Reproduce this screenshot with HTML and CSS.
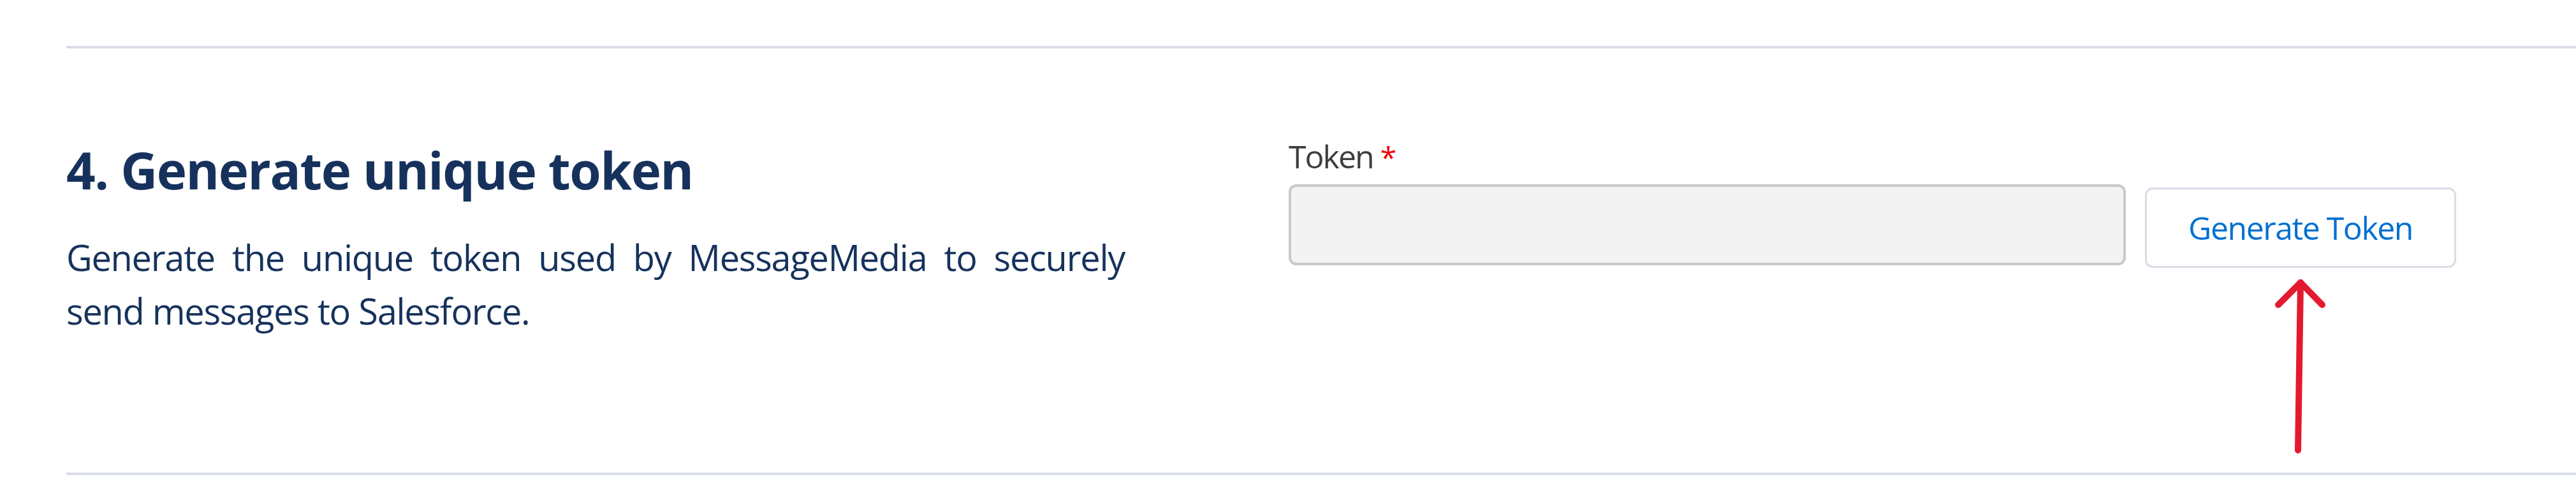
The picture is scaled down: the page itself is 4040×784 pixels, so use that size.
FILE: index.html
```html
<!DOCTYPE html>
<html lang="en">
    <head>
        <meta charset="UTF-8">
        <meta name="viewport" content="width=device-width, initial-scale=1">
        <title>Generate unique token</title>
        <link rel="stylesheet" href="styles.css">
    </head>
    <body>
        <section class="step">
            <div class="step-info">
                <h2 class="step-title">4. Generate unique token</h2>
                <p class="step-text">Generate the unique token used by MessageMedia to securely send messages to Salesforce.</p>
            </div>
            <div class="step-form">
                <label class="field-label" for="token">Token <abbr class="required" title="required">*</abbr></label>
                <div class="field-row">
                    <input class="field-input" id="token" type="text" readonly>
                    <div class="action">
                        <button class="btn" type="button">Generate Token</button>
                        <!-- annotation arrow pointing at the button -->
                        <svg class="arrow" width="100" height="290" viewBox="0 0 100 290">
                            <path d="M46 275 L50 12" />
                            <path d="M15 47 L50 12 L84 47" />
                        </svg>
                    </div>
                </div>
            </div>
        </section>
    </body>
</html>
```

FILE: styles.css
```css
body {
    margin: 0;
    background-color: #fff;
    font-family: "Open Sans", "Noto Sans", sans-serif;
}
.step {
    display: flex;
    margin: 72px 0 0 104px;
    padding: 140px 0 20px;
    border-top: 4px solid #d8dde6;
    border-bottom: 4px solid #d8dde6;
}
.step-info {
    width: 1660px;
    flex-shrink: 0;
}
.step-title {
    margin: 0;
    font-size: 80px;
    line-height: 100px;
    font-weight: 700;
    letter-spacing: -1.4px;
    color: #16325c;
}
.step-text {
    margin: 45px 0 0;
    font-size: 56px;
    line-height: 84px;
    letter-spacing: -1.3px;
    color: #16325c;
    text-align: justify;
}
.step-form {
    margin-left: 257px;
}
.field-label {
    display: block;
    margin-bottom: 13px;
    font-size: 50px;
    line-height: 59px;
    letter-spacing: -2px;
    color: #3e3e3c;
}
.required {
    font-size: 46px;
    color: #ee0000;
    text-decoration: none;
}
.field-row {
    display: flex;
    align-items: flex-start;
}
.field-input {
    box-sizing: border-box;
    width: 1313px;
    height: 127px;
    margin: 0;
    padding: 0 24px;
    border: 4px solid #c9c9c9;
    border-radius: 12px;
    background-color: #f3f3f3;
    font: inherit;
}
.action {
    display: flex;
    flex-direction: column;
    align-items: center;
    margin-left: 30px;
    padding-top: 5px;
}
.btn {
    box-sizing: border-box;
    width: 488px;
    height: 126px;
    padding: 0;
    border: 3px solid #d8dde6;
    border-radius: 12px;
    background-color: #fff;
    color: #0070d2;
    font-family: inherit;
    font-size: 50px;
    letter-spacing: -1.5px;
}
.arrow {
    display: block;
    margin-top: 11px;
}
.arrow path {
    fill: none;
    stroke: #e31a2f;
    stroke-width: 10;
    stroke-linecap: round;
    stroke-linejoin: round;
}
```
